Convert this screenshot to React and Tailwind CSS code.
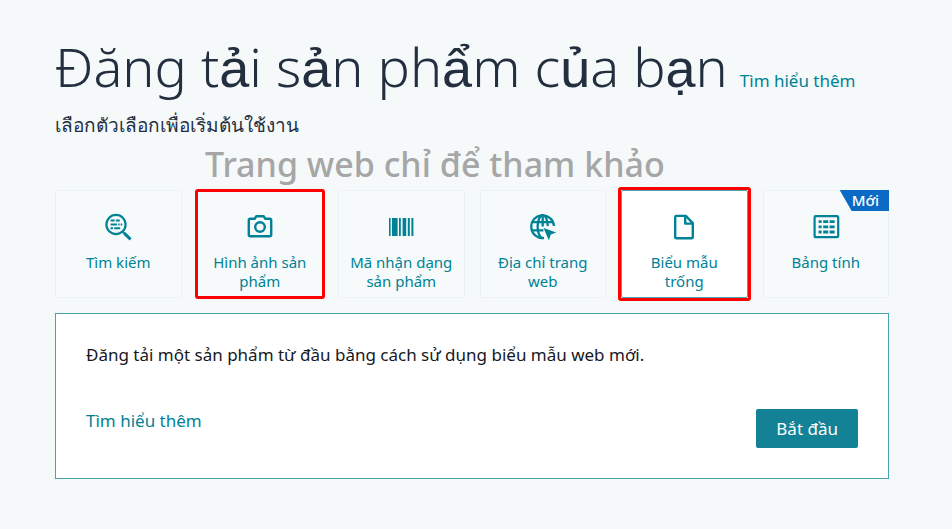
import React, { useState } from "react";

function SearchIcon() {
  return (
    <svg className="shrink-0" width="28" height="28" viewBox="0 0 28 28" fill="none" stroke="currentColor" aria-hidden="true">
      <circle cx="12" cy="11.5" r="9.6" strokeWidth="2.2" />
      <path d="M18.5 18.5l2 2" strokeWidth="2" />
      <path d="M20.2 20.2l6.4 6.2" strokeWidth="3" />
      <path d="M6.6 7.6h4M11.8 7.6h4M6.6 11.4H13M14.2 11.4h1.4M16.6 11.4h1.6M6.6 15.2H9M10.2 15.2h6" strokeWidth="2" />
    </svg>
  );
}

function CameraIcon() {
  return (
    <svg className="shrink-0" width="28" height="28" viewBox="0 0 28 28" fill="none" stroke="currentColor" aria-hidden="true">
      <path
        d="M4.4 5.7h4.4l1.4-2.4h7.6l1.4 2.4h4.4c.9 0 1.6.6 1.6 1.5v14.6c0 .9-.7 1.5-1.6 1.5H4.4c-.9 0-1.6-.6-1.6-1.5V7.2c0-.9.7-1.5 1.6-1.5z"
        strokeWidth="2.4"
        strokeLinejoin="round"
      />
      <circle cx="14" cy="14" r="4.8" strokeWidth="2.4" />
    </svg>
  );
}

function BarcodeIcon() {
  return (
    <svg className="shrink-0" width="28" height="28" viewBox="0 0 28 28" fill="currentColor" aria-hidden="true">
      <path d="M2 5h1.6v18H2zM5 5h5.6v18H5zM12 5h1.8v18H12zM15.6 5h3.6v18h-3.6zM20.8 5h2v18h-2zM24.4 5h2v18h-2z" />
    </svg>
  );
}

function GlobeIcon() {
  return (
    <svg className="shrink-0" width="28" height="28" viewBox="0 0 28 28" fill="none" stroke="currentColor" strokeWidth="2.3" aria-hidden="true">
      <path d="M25 13A11.4 11.4 0 1 0 15 25" />
      <path d="M18.8 13C18.6 6.5 16.4 2.2 13.7 2.2S8.6 7 8.6 13.6s2.4 11.3 5.1 11.3" />
      <path d="M13.7 2.4v11M3.6 9.2h20.4M2.8 17.4h11.6" />
      <path d="M14.6 15l12.6 4.4-5.4 2-2 5.8z" fill="currentColor" stroke="none" />
    </svg>
  );
}

function FileIcon() {
  return (
    <svg className="shrink-0" width="28" height="28" viewBox="0 0 28 28" fill="none" stroke="currentColor" strokeWidth="2.4" strokeLinejoin="round" aria-hidden="true">
      <path d="M6.2 2.9h9.6l7 7.2v14.2c0 .6-.4 1-1 1H6.2c-.6 0-1-.4-1-1V3.9c0-.6.4-1 1-1z" />
      <path d="M15.2 3.2v7.4h7.4" />
    </svg>
  );
}

function TableIcon() {
  return (
    <svg className="shrink-0" width="28" height="28" viewBox="0 0 28 28" fill="none" stroke="currentColor" aria-hidden="true">
      <rect x="2.6" y="3.2" width="23.6" height="21" rx="1.2" strokeWidth="2.2" />
      <path
        d="M6.6 8.6h3M11.2 8.6h5M17.6 8.6h5M6.6 13.8h3M11.2 13.8h5M17.6 13.8h5M6.6 19h3M11.2 19h5M17.6 19h5"
        strokeWidth="2.8"
      />
    </svg>
  );
}

const options = [
  { id: "search", label: "Tìm kiếm", icon: SearchIcon },
  { id: "image", label: "Hình ảnh sản phẩm", icon: CameraIcon, frame: "-inset-x-[3px] -inset-y-0.5" },
  { id: "barcode", label: "Mã nhận dạng sản phẩm", icon: BarcodeIcon },
  { id: "url", label: "Địa chỉ trang web", icon: GlobeIcon },
  { id: "form", label: "Biểu mẫu trống", icon: FileIcon, frame: "-inset-1" },
  { id: "sheet", label: "Bảng tính", icon: TableIcon, badge: "Mới" },
];

// letters that the light face lacks are set in the heavier fallback face
function Alt({ children }) {
  return <span className="font-['Liberation_Sans'] font-normal">{children}</span>;
}

function OptionCard({ option, selected, onSelect }) {
  const Icon = option.icon;
  return (
    <button
      type="button"
      aria-pressed={selected}
      onClick={() => onSelect(option.id)}
      className={`relative flex h-[108px] flex-col items-center rounded-xs border px-2 pt-[22px] text-[15px] leading-[19px] text-[#008296] ${
        selected ? "border-[#4ba3b1] bg-white" : "border-[#ebf2f3] bg-[#f6fafb]"
      }`}
    >
      <Icon />
      <span className="mt-3">{option.label}</span>
      {option.badge && (
        <span className="absolute -top-px -right-px bg-[#0a6ac4] pr-2.5 pl-3 leading-[21px] font-medium text-white [clip-path:polygon(0_0,100%_0,100%_100%,12px_100%)]">
          {option.badge}
        </span>
      )}
      {option.frame && (
        <span className={`absolute rounded-[3px] border-3 border-[#ff0000] ${option.frame}`} />
      )}
    </button>
  );
}

function App() {
  const [selected, setSelected] = useState("form");

  return (
    <main className="min-h-screen bg-[#f5f9fa] pt-[30px] pr-[63px] pb-12 pl-[55px] font-['Noto_Sans',sans-serif] text-[#232f3e]">
      <header>
        <div className="flex items-baseline gap-3">
          <h1 className="text-[54px] leading-[72px] font-light whitespace-nowrap">
            Đăng t<Alt>ả</Alt>i s<Alt>ả</Alt>n ph<Alt>ẩ</Alt>m c<Alt>ủ</Alt>a b<Alt>ạ</Alt>n
          </h1>
          <a href="#learn" className="text-[17px] whitespace-nowrap text-[#008296]">
            Tìm hiểu thêm
          </a>
        </div>
        <p className="mt-2 text-[19px] leading-[26px]">เลือกตัวเลือกเพื่อเริ่มต้นใช้งาน</p>
        <p className="ml-[150px] text-[34px] leading-[52px] font-medium text-[#a6a6a6]">
          Trang web chỉ để tham khảo
        </p>
      </header>

      <div className="grid grid-cols-6 gap-[15px]">
        {options.map((option) => (
          <OptionCard
            key={option.id}
            option={option}
            selected={option.id === selected}
            onSelect={setSelected}
          />
        ))}
      </div>

      <section className="mt-[15px] border border-[#4ba3b1] bg-white px-[30px] pt-[29px] pb-[30px]">
        <p className="text-[17px] leading-6 text-[#16191f]">
          Đăng tải một sản phẩm từ đầu bằng cách sử dụng biểu mẫu web mới.
        </p>
        <div className="mt-[42px] flex items-start justify-between">
          <a href="#learn" className="text-[17px] leading-6 text-[#008296]">
            Tìm hiểu thêm
          </a>
          <button type="button" className="rounded-xs bg-[#148296] px-5 text-[17px] leading-[39px] text-white">
            Bắt đầu
          </button>
        </div>
      </section>
    </main>
  );
}

export default App;
